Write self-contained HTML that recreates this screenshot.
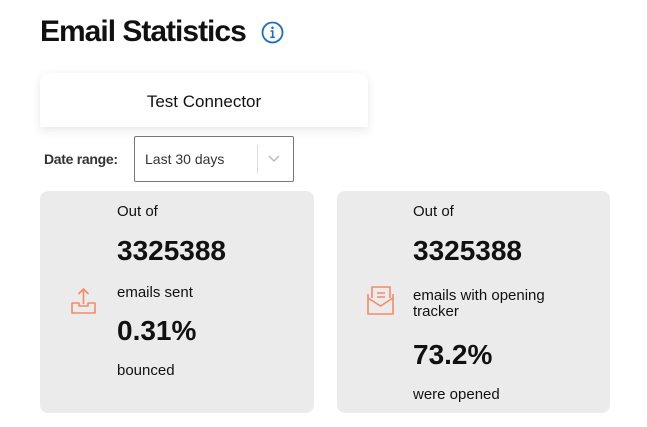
<!DOCTYPE html>
<html><head><meta charset="utf-8"><style>
*{margin:0;padding:0;box-sizing:border-box}
body{width:647px;height:427px;background:#fff;font-family:"Liberation Sans",sans-serif;color:#111;position:relative;overflow:hidden}
.a{position:absolute;white-space:nowrap}
.card{position:absolute;background:#ebebeb;border-radius:8px;top:191px;height:222px}
.sm{font-size:15px}
.big{font-size:28px;font-weight:bold;letter-spacing:0}
</style></head><body>
<div class="a" style="left:40px;top:15px;font-size:30px;font-weight:bold;letter-spacing:-1px">Email Statistics</div>
<svg class="a" style="left:261px;top:21px" width="23" height="23" viewBox="0 0 23 23"><circle cx="11.5" cy="11.5" r="10" fill="none" stroke="#1a6fc0" stroke-width="1.8"/><circle cx="11.5" cy="6.8" r="1.3" fill="#1a6fc0"/><path d="M9.5 10h2.2v6M9.3 16.3h4.5" fill="none" stroke="#1a6fc0" stroke-width="1.6"/></svg>
<div class="a" style="left:40px;top:73px;width:328px;height:54px;background:#fff;border-radius:10px 10px 0 0;box-shadow:0 3px 10px rgba(0,0,0,0.1);text-align:center;line-height:58px;font-size:17px">Test Connector</div>
<div class="a" style="left:44px;top:151px;font-size:14px;font-weight:bold;color:#333;letter-spacing:-0.3px">Date range:</div>
<div class="a" style="left:134px;top:136px;width:160px;height:46px;border:1px solid #777;border-radius:2px"></div>
<div class="a" style="left:145px;top:151px;font-size:14px;color:#333">Last 30 days</div>
<div class="a" style="left:257px;top:145px;width:1px;height:28px;background:#ddd"></div>
<svg class="a" style="left:268px;top:154px" width="12" height="9" viewBox="0 0 12 9"><path d="M1 2l5 5 5-5" fill="none" stroke="#bbb" stroke-width="1.5"/></svg>

<div class="card" style="left:40px;width:274px"></div>
<div class="card" style="left:337px;width:273px"></div>

<svg class="a" style="left:70px;top:286px" width="27" height="30" viewBox="0 0 27 30"><path d="M13.5 3v15M8.5 8l5-5 5 5M2 17v10h23V17h-7v3h-9v-3z" fill="none" stroke="#f58b66" stroke-width="1.6" stroke-linejoin="round"/></svg>
<div class="a sm" style="left:117px;top:203px">Out of</div>
<div class="a big" style="left:117px;top:235px">3325388</div>
<div class="a sm" style="left:117px;top:284px">emails sent</div>
<div class="a big" style="left:117px;top:315px">0.31%</div>
<div class="a sm" style="left:117px;top:362px">bounced</div>

<svg class="a" style="left:366px;top:285px" width="30" height="31" viewBox="0 0 30 31"><path d="M6 13V2h18v11" fill="none" stroke="#f58b66" stroke-width="1.6"/><path d="M11 8h8M11 12h8" stroke="#f58b66" stroke-width="1.6"/><path d="M2 9v20h25V9M2 13l12.5 8 12.5-8" fill="none" stroke="#f58b66" stroke-width="1.6" stroke-linejoin="round"/></svg>
<div class="a sm" style="left:413px;top:203px">Out of</div>
<div class="a big" style="left:413px;top:235px">3325388</div>
<div class="a sm" style="left:413px;top:288px;line-height:16px">emails with opening<br>tracker</div>
<div class="a big" style="left:413px;top:339px">73.2%</div>
<div class="a sm" style="left:413px;top:386px">were opened</div>
</body></html>
